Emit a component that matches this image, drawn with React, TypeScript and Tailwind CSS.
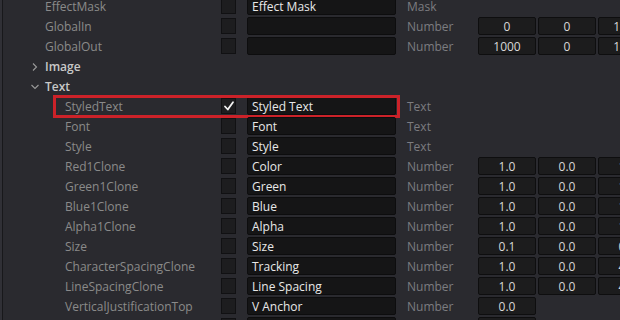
import React from 'react';

type Row =
  | { kind: 'group'; label: string; open: boolean }
  | {
      kind: 'field';
      label: string;
      indent?: boolean;
      checked?: boolean;
      input: string;
      type: string;
      values: string[];
      highlight?: boolean;
    };

const rows: Row[] = [
  { kind: 'field', label: 'EffectMask', input: 'Effect Mask', type: 'Mask', values: [] },
  { kind: 'field', label: 'GlobalIn', input: '', type: 'Number', values: ['0', '0', '1000'] },
  { kind: 'field', label: 'GlobalOut', input: '', type: 'Number', values: ['1000', '0', '1000'] },
  { kind: 'group', label: 'Image', open: false },
  { kind: 'group', label: 'Text', open: true },
  { kind: 'field', label: 'StyledText', indent: true, checked: true, input: 'Styled Text', type: 'Text', values: [], highlight: true },
  { kind: 'field', label: 'Font', indent: true, input: 'Font', type: 'Text', values: [] },
  { kind: 'field', label: 'Style', indent: true, input: 'Style', type: 'Text', values: [] },
  { kind: 'field', label: 'Red1Clone', indent: true, input: 'Color', type: 'Number', values: ['1.0', '0.0', '1.0'] },
  { kind: 'field', label: 'Green1Clone', indent: true, input: 'Green', type: 'Number', values: ['1.0', '0.0', '1.0'] },
  { kind: 'field', label: 'Blue1Clone', indent: true, input: 'Blue', type: 'Number', values: ['1.0', '0.0', '1.0'] },
  { kind: 'field', label: 'Alpha1Clone', indent: true, input: 'Alpha', type: 'Number', values: ['1.0', '0.0', '1.0'] },
  { kind: 'field', label: 'Size', indent: true, input: 'Size', type: 'Number', values: ['0.1', '0.0', '0.5'] },
  { kind: 'field', label: 'CharacterSpacingClone', indent: true, input: 'Tracking', type: 'Number', values: ['1.0', '0.0', '4.0'] },
  { kind: 'field', label: 'LineSpacingClone', indent: true, input: 'Line Spacing', type: 'Number', values: ['1.0', '0.0', '4.0'] },
  { kind: 'field', label: 'VerticalJustificationTop', indent: true, input: 'V Anchor', type: 'Number', values: ['0.0'] },
  { kind: 'field', label: 'VerticalJustificationCenter', indent: true, input: '', type: 'Number', values: ['0.0'] },
];

const Chevron = ({ open }: { open: boolean }) => (
  <svg width="10" height="10" viewBox="0 0 10 10" className="text-[#9a9a9a] shrink-0">
    {open ? (
      <path d="M1.5 3 L5 6.5 L8.5 3" fill="none" stroke="currentColor" strokeWidth="1.1" />
    ) : (
      <path d="M3 1.5 L6.5 5 L3 8.5" fill="none" stroke="currentColor" strokeWidth="1.1" />
    )}
  </svg>
);

const Check = () => (
  <svg width="12" height="12" viewBox="0 0 12 12">
    <path d="M2 6.5 L4.8 9.5 L10 2.2" fill="none" stroke="#f2f2f2" strokeWidth="1.8" strokeLinecap="round" strokeLinejoin="round" />
  </svg>
);

export default function App() {
  return (
    <div
      className="w-[620px] h-[320px] overflow-hidden bg-[#2a2a2f] flex text-[12px]"
      style={{ fontFamily: '"Open Sans", "Noto Sans", sans-serif' }}
    >
      <div className="w-[2px] shrink-0 bg-[#303036]" />
      <div className="w-[1px] shrink-0 bg-[#18181b]" />
      <div className="flex-1 min-w-0 flex flex-col mt-[-4px]">
        {rows.map((row, i) =>
          row.kind === 'group' ? (
            <div key={i} className="h-[20px] flex items-center shrink-0 pt-[1px]">
              <div className="w-[27px] shrink-0" />
              <Chevron open={row.open} />
              <span className="ml-[5px] text-[#c8c8c8] font-semibold">{row.label}</span>
            </div>
          ) : (
            <div key={i} className="relative h-[20px] flex items-center shrink-0">
              <div
                className={`${row.indent ? 'pl-[62px]' : 'pl-[42px]'} w-[218px] shrink-0 pt-[2px] text-[#8a8a8a] whitespace-nowrap leading-none`}
              >
                {row.label}
              </div>
              <div className="w-[15px] h-[16px] shrink-0 bg-[#1d1d1f] border border-[#111113] flex items-center justify-center">
                {row.checked && <Check />}
              </div>
              <div className="ml-[11px] w-[149px] h-[18px] shrink-0 bg-[#151516] border border-[#0d0d0e] rounded-[2px] pl-[4px] pt-[1px] flex items-center text-[#e8e8e8] whitespace-nowrap">
                {row.input}
              </div>
              <div className="ml-[11px] w-[71px] shrink-0 pt-[2px] text-[#7c7c80]">{row.type}</div>
              <div className="flex gap-[2px] shrink-0">
                {row.values.map((v, j) => (
                  <div
                    key={j}
                    className="w-[58px] h-[18px] shrink-0 bg-[#1c1c1d] border border-[#0e0e0f] rounded-[2px] pt-[1px] flex items-center justify-center text-[#d8d8d8]"
                  >
                    {v}
                  </div>
                ))}
              </div>
              {row.highlight && (
                <div className="absolute left-[50px] top-[-1px] w-[347px] h-[23px] border-[3px] border-[#cc2229] pointer-events-none" />
              )}
            </div>
          )
        )}
      </div>
    </div>
  );
}
